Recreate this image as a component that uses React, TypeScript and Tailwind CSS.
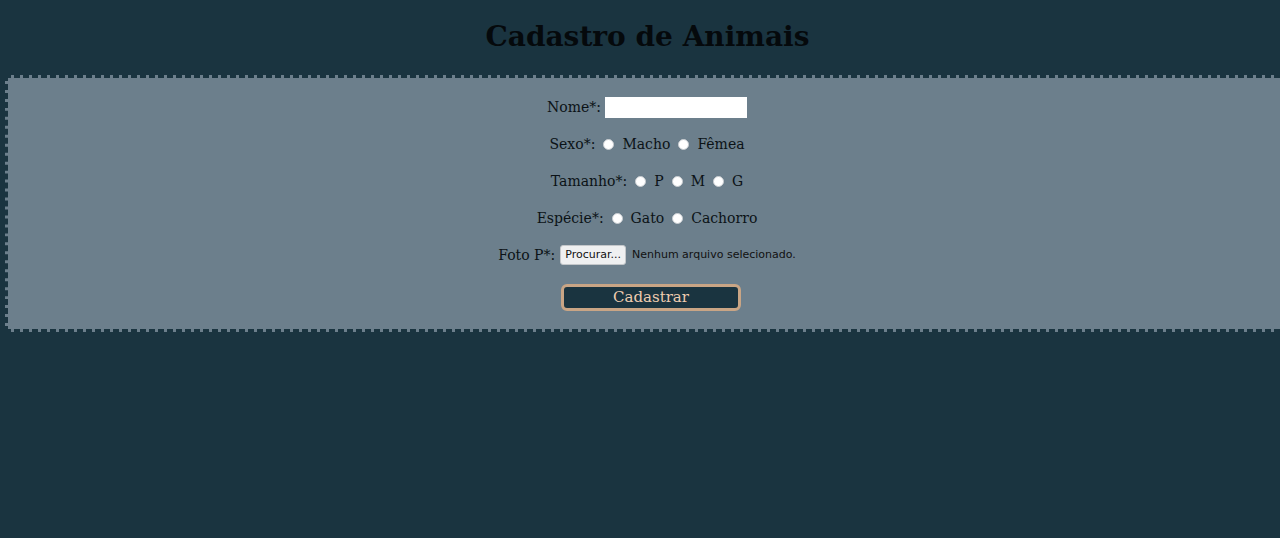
import React from 'react';

const Radio: React.FC<{ name: string; label: string }> = ({ name, label }) => (
  <label className="flex items-center gap-[8px]">
    <input
      type="radio"
      name={name}
      className="appearance-none w-[11px] h-[11px] rounded-full bg-white border border-[#c9cdd1] m-0"
    />
    <span>{label}</span>
  </label>
);

export default function App() {
  return (
    <div className="min-h-screen w-full overflow-hidden bg-[#1a3440] text-[#0b1216] font-['Georgia','DejaVu_Serif',serif]">
      {/* Titulo */}
      <h1 className="w-[1295px] text-center text-[28px] font-bold text-[#05090c] pt-[19px] pb-[20px] leading-[36px]">Cadastro de Animais</h1>

      {/* Formulario */}
      <form className="ml-[5px] w-[1284px] bg-[#6c7f8c] border-[3px] border-dashed border-[#1a3440] pt-[18px] pb-[18px] text-[14px]">
        <div className="flex flex-col items-center gap-[15px]">
          <div className="flex items-center gap-[4px] h-[22px]">
            <span>Nome*:</span>
            <input type="text" className="w-[142px] h-[21px] bg-white outline-none" />
          </div>

          <div className="flex items-center gap-[8px] h-[22px]">
            <span>Sexo*:</span>
            <Radio name="sexo" label="Macho" />
            <Radio name="sexo" label="Fêmea" />
          </div>

          <div className="flex items-center gap-[8px] h-[22px]">
            <span>Tamanho*:</span>
            <Radio name="tam" label="P" />
            <Radio name="tam" label="M" />
            <Radio name="tam" label="G" />
          </div>

          <div className="flex items-center gap-[8px] h-[22px]">
            <span>Espécie*:</span>
            <Radio name="esp" label="Gato" />
            <Radio name="esp" label="Cachorro" />
          </div>

          <div className="flex items-center gap-[5px] h-[22px]">
            <span>Foto P*:</span>
            <label className="flex items-center gap-[6px] font-['DejaVu_Sans',sans-serif] text-[11px]">
              <span className="bg-[#eff0f1] border border-[#c4c7ca] rounded-[3px] px-[4px] h-[20px] flex items-center text-[#111]">Procurar...</span>
              <span className="text-[#111]">Nenhum arquivo selecionado.</span>
            </label>
          </div>

          <button
            type="button"
            className="mt-[3px] ml-[8px] w-[180px] h-[27px] bg-[#1a3440] border-[3px] border-[#c9a585] rounded-[6px] text-[#efcdb0] text-[15px] leading-none"
          >
            Cadastrar
          </button>
        </div>
      </form>
    </div>
  );
}
